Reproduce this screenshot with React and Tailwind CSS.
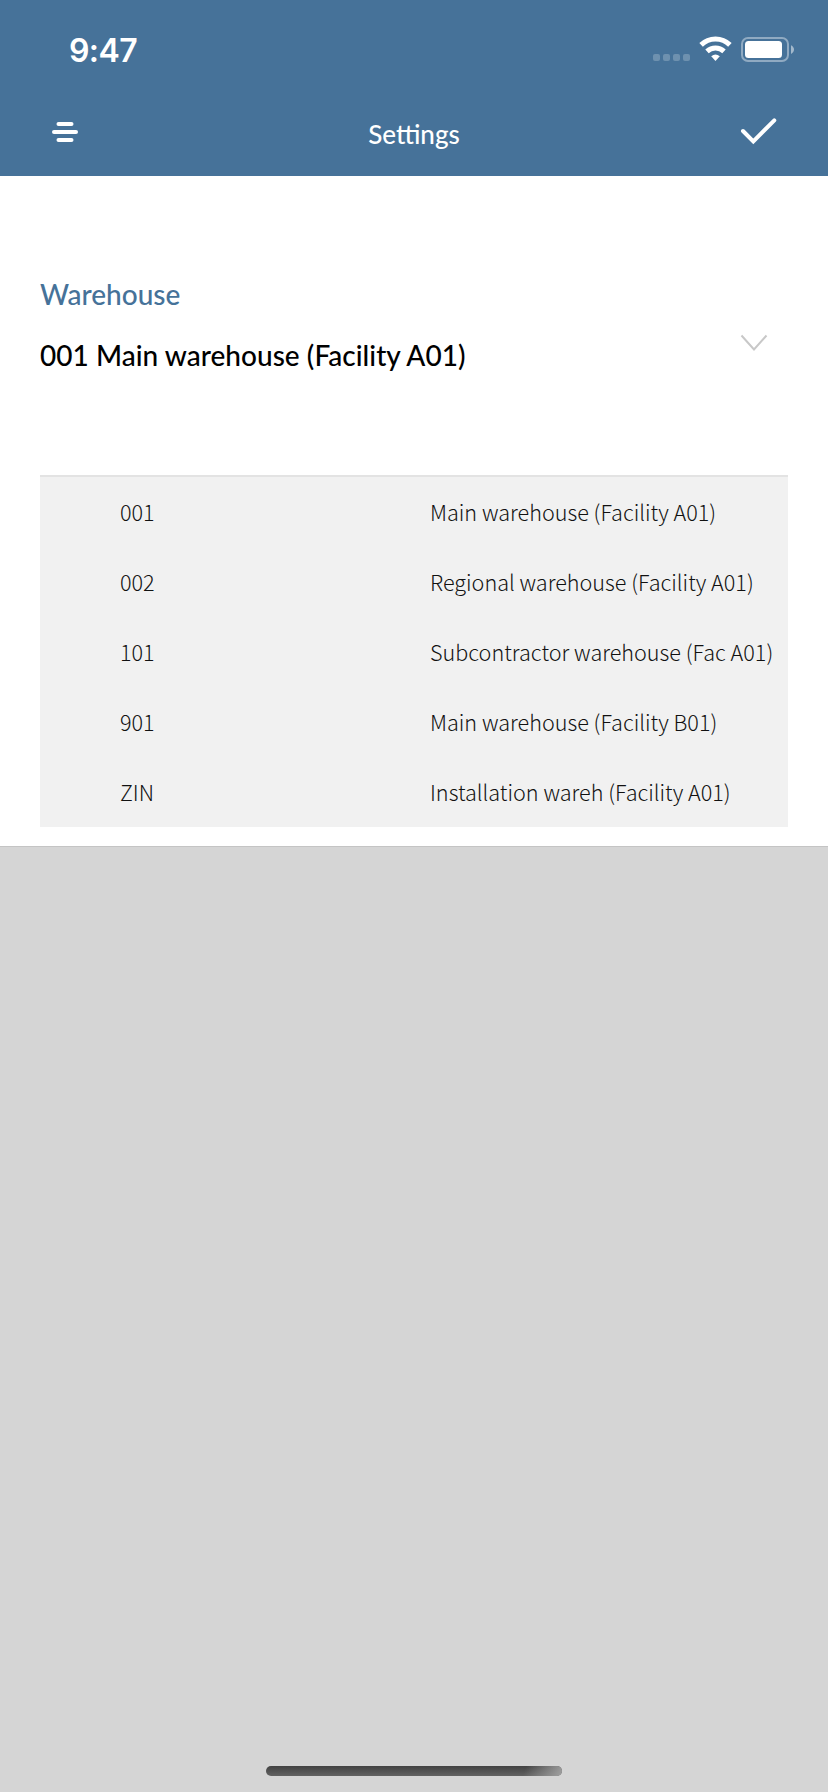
const warehouses = [
  ["001", "Main warehouse (Facility A01)"],
  ["002", "Regional warehouse (Facility A01)"],
  ["101", "Subcontractor warehouse (Fac A01)"],
  ["901", "Main warehouse (Facility B01)"],
  ["ZIN", "Installation wareh (Facility A01)"],
];

function StatusBar() {
  return (
    <div className="flex h-[98px] items-center justify-between pr-[34px] pl-[69px]">
      <span className="pt-[3px] font-['Inter',sans-serif] text-[32px] leading-none font-semibold tracking-[-0.6px]">
        9:47
      </span>
      <svg width="142" height="28" viewBox="0 0 142 28" fill="none">
        <g fill="#fff" fillOpacity="0.22">
          <rect x="1" y="19" width="7" height="7" rx="2" />
          <rect x="11" y="19" width="7" height="7" rx="2" />
          <rect x="21" y="19" width="7" height="7" rx="2" />
          <rect x="31" y="19" width="7" height="7" rx="2" />
        </g>
        <g stroke="#fff" strokeWidth="5">
          <path d="M49.100 9.900A20.500 20.500 0 0 1 77.900 9.900" />
          <path d="M55 16.300A12.500 12.500 0 0 1 72 16.300" />
        </g>
        <path d="M59.200 21.200A7.200 7.200 0 0 1 67.800 21.200L63.500 26Z" fill="#fff" />
        <rect x="90" y="3" width="46" height="23" rx="6" stroke="#fff" strokeOpacity="0.4" strokeWidth="2" />
        <rect x="93" y="6" width="37" height="17" rx="3.500" fill="#fff" />
        <path d="M139 10.200C143 12 143 17.200 139 19Z" fill="#fff" fillOpacity="0.5" />
      </svg>
    </div>
  );
}

export default function App() {
  return (
    <div className="flex h-[1792px] w-[828px] flex-col bg-[#d5d5d5] font-['Lato',sans-serif]">
      <header className="h-[176px] bg-[#467299] text-white">
        <StatusBar />
        <div className="grid h-[78px] grid-cols-3 items-center pr-[50px] pl-[50px]">
          <svg className="mb-[10px]" width="30" height="24" viewBox="0 0 30 24" fill="#fff">
            <rect x="6.500" y="2" width="17" height="4" rx="2" />
            <rect x="2" y="10" width="26" height="4" rx="2" />
            <rect x="6.500" y="18" width="17" height="4" rx="2" />
          </svg>
          <h1 className="mb-[7px] text-center text-[26px] leading-none font-medium">Settings</h1>
          <svg className="mb-[14px] justify-self-end" width="40" height="32" viewBox="0 0 40 32" fill="none">
            <path d="M5 17L15.300 27.300L36.300 6.300" stroke="#fff" strokeWidth="4" strokeLinecap="round" />
          </svg>
        </div>
      </header>

      <main className="flex h-[670px] flex-col bg-white px-10 pt-[97px]">
        <div className="flex h-[202px] items-start justify-between">
          <div>
            <h2 className="text-[28px] leading-[42px] font-medium text-[#467299]">Warehouse</h2>
            <p className="mt-[19px] text-[28px] leading-[42px] font-medium tracking-[0.03px] text-black">
              001 Main warehouse (Facility A01)
            </p>
          </div>
          <svg className="mt-[58px] mr-[19px]" width="30" height="24" viewBox="0 0 30 24" fill="none">
            <path d="M2.500 4.500L15 18.500L27.500 4.500" stroke="#c8c8c8" strokeWidth="2" />
          </svg>
        </div>
        <div className="border-t-2 border-[#e3e3e3] bg-[#f1f1f1]">
          {warehouses.map(([code, name]) => (
            <div
              key={code}
              className="grid h-[70px] grid-cols-2 items-center font-['Noto_Sans_CJK_SC',sans-serif] text-[21.6px] leading-none font-light text-[#111]"
            >
              <span className="pl-20">{code}</span>
              <span className="pl-4 whitespace-nowrap">{name}</span>
            </div>
          ))}
        </div>
      </main>

      <footer className="flex grow items-end justify-center border-t border-[#c4c4c4] pb-4">
        <div className="flex h-[10px] w-[296px] justify-end overflow-hidden rounded-full bg-linear-to-b from-[#424242] to-[#626262]">
          <div className="w-[40px] bg-linear-[110deg] from-[#a0a0a0]/0 from-10% to-[#a0a0a0]" />
        </div>
      </footer>
    </div>
  );
}
